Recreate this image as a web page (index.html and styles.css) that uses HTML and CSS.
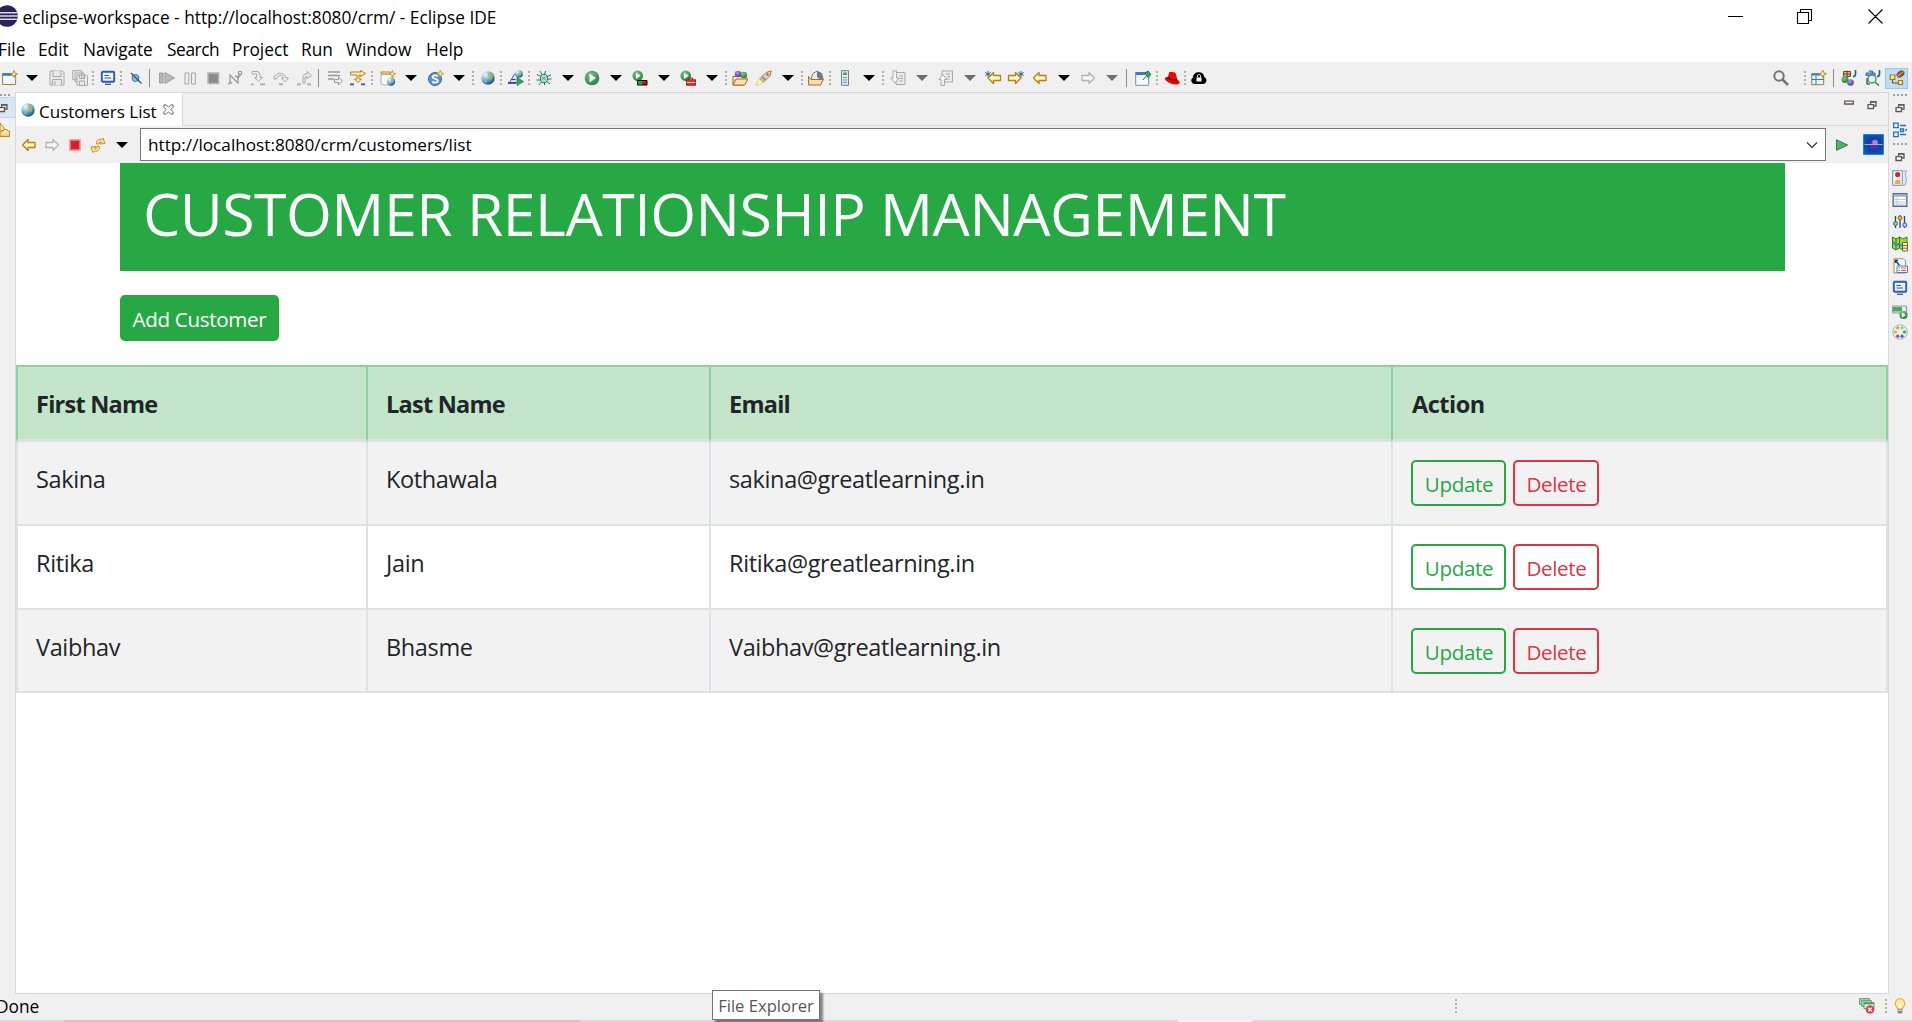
FILE: index.html
```
<!DOCTYPE html>
<html lang="en">
<head>
<meta charset="utf-8">
<title>eclipse-workspace - Eclipse IDE</title>
<link rel="stylesheet" href="styles.css">
</head>
<body>
<svg class="defs" aria-hidden="true">
  <defs>
    <radialGradient id="gGlobe" cx=".3" cy=".25" r=".85"><stop offset="0" stop-color="#f0fafe"/><stop offset=".5" stop-color="#6db1d8"/><stop offset="1" stop-color="#173f78"/></radialGradient>
    <radialGradient id="gGreen" cx=".4" cy=".3" r=".8"><stop offset="0" stop-color="#7cc58a"/><stop offset="1" stop-color="#1b7a34"/></radialGradient>
    <radialGradient id="gPurple" cx=".4" cy=".3" r=".8"><stop offset="0" stop-color="#a79bd8"/><stop offset="1" stop-color="#45348f"/></radialGradient>
    <linearGradient id="gFold" x1="0" y1="0" x2="0" y2="1"><stop offset="0" stop-color="#fff6d8"/><stop offset="1" stop-color="#efc56c"/></linearGradient>
    <radialGradient id="gEcl" cx=".55" cy=".5" r=".75"><stop offset="0" stop-color="#0a2c86"/><stop offset="1" stop-color="#0d62c6"/></radialGradient>
  </defs>
  <symbol id="caret" viewBox="0 0 16 16"><path d="M2 5h12L8 11z"/></symbol>
  <symbol id="dots" viewBox="0 0 4 16"><path d="M1 1h2v2H1zM1 5h2v2H1zM1 9h2v2H1zM1 13h2v2H1z" fill="#b9b0a2"/></symbol>
  <symbol id="hdots" viewBox="0 0 16 4"><path d="M1 1h2v2H1zM5 1h2v2H5zM9 1h2v2H9zM13 1h2v2h-2z" fill="#a79f94"/></symbol>
  <symbol id="plus" viewBox="0 0 8 8"><path d="M4 .5L5 3l2.500 1L5 5 4 7.500 3 5 .5 4 3 3z" fill="#fff3b0" stroke="#b98a12" stroke-width=".9"/></symbol>
  <symbol id="back" viewBox="0 0 16 16"><path d="M1.500 8L7 2.500V5.500h7v5H7v3z" stroke-width="1.300" stroke-linejoin="round"/></symbol>
  <symbol id="fwd" viewBox="0 0 16 16"><path d="M14.500 8L9 2.500V5.500H2v5h7v3z" stroke-width="1.300" stroke-linejoin="round"/></symbol>
  <symbol id="star" viewBox="0 0 6 6"><path d="M3 0v6M.3 1.500l5.400 3M.3 4.500l5.400-3" stroke="#2b5f8c" stroke-width="1"/></symbol>
  <symbol id="globe" viewBox="0 0 16 16"><circle cx="8" cy="8" r="6.700" fill="url(#gGlobe)"/><path d="M8.500 3l3-.3 2 2.300-1 2-1.500 3.500-1.500-2L8 6zM4 9l2.500 1L6 13 4 11.500z" fill="#a9b862" opacity=".8"/></symbol>
  <symbol id="runball" viewBox="0 0 16 16"><circle cx="8" cy="8" r="7.300" fill="url(#gGreen)"/><path d="M5.500 3.500L11.800 8l-6.300 4.500z" fill="#fff"/></symbol>
  <symbol id="mon" viewBox="0 0 16 16"><rect x="1.800" y="1.800" width="12.400" height="9.900" rx="1" fill="#eaf3fc" stroke="#2d5da3" stroke-width="1.900"/><path d="M4.500 5.500H9M4.500 8h6.500" stroke="#44547c" stroke-width="1.100"/><path d="M5 13.700h6v1.200H5z" fill="#2d4b93"/></symbol>
  <symbol id="balls" viewBox="0 0 16 16"><path d="M1 6.500h13.500L12 15H1z" fill="url(#gFold)" stroke="#a3692b"/><circle cx="6" cy="4" r="3.300" fill="url(#gPurple)"/><circle cx="11.700" cy="5" r="3.300" fill="url(#gGreen)"/><path d="M1 15l3-6h12l-3.500 6z" fill="#fbe3ac" stroke="#a3692b"/></symbol>
  <symbol id="restore" viewBox="0 0 10 10"><path d="M3.600 4V1.700h5.400V6H7M3 2h6.500" fill="none" stroke="#5e5853" stroke-width="1.300"/><path d="M1 4.700h5.500v3.800H1z" fill="#fff" stroke="#5e5853" stroke-width="1.300"/></symbol>
</svg>

<header class="titlebar">
  <svg class="logo" viewBox="0 0 18 22"><circle cx="7" cy="11" r="10.800" fill="#2c2255"/><path d="M0 7.800h17.300M0 11h18M0 14.200h17.300" stroke="#d8d6ea" stroke-width="1.500"/></svg>
  <span class="caption">eclipse-workspace - http://localhost:8080/crm/ - Eclipse IDE</span>
  <svg class="winctl" viewBox="0 0 160 20" fill="none" stroke="#000" stroke-width="1.100"><path d="M0 9.500h15M69.500 5.500h11v11h-11zM72.500 5.500v-3h11v11h-3M140.500 2.500l14 14M154.500 2.500l-14 14"/></svg>
</header>

<nav class="menubar"><span>File</span><span>Edit</span><span>Navigate</span><span>Search</span><span>Project</span><span>Run</span><span>Window</span><span>Help</span></nav>

<div class="toolbar">
  <svg viewBox="0 0 16 16"><path d="M.6 3.500h13v11H.6z" fill="#f3faff" stroke="#9a7b3a"/><path d="M.6 3h10v2.800H.6z" fill="#3d7ec0"/><path d="M8 13.500c4-1 5-4 5-6" stroke="#cfe6f6" fill="none"/><use href="#plus" x="8" width="8" height="8"/></svg>
  <svg class="car"><use href="#caret"/></svg>
  <svg viewBox="0 0 16 16" fill="#e9e9e9" stroke="#aaa"><path d="M1 1h12.500L15 2.500V15H1z"/><path d="M4 1v5.500h8V1M3.500 15V9.500h9V15M6 11v4" /></svg>
  <svg viewBox="0 0 16 16" fill="#e9e9e9" stroke="#aaa"><path d="M.7.7h9v9h-9zM3 3h9v9H3z"/><path d="M5 5h9.500L15.500 6v9.500H5zM7.500 5v3.500h5V5M7.500 15.500V11h5v4.500"/></svg>
  <svg class="dot"><use href="#dots"/></svg>
  <svg><use href="#mon"/></svg>
  <svg class="dot"><use href="#dots"/></svg>
  <svg viewBox="0 0 16 16"><circle cx="7.500" cy="8" r="3.500" fill="#8fc0dc" stroke="#2f7ba8"/><path d="M3 3l10.500 10.500" stroke="#3b4a56" stroke-width="1.300"/></svg>
  <i class="bar"></i>
  <svg viewBox="0 0 16 16" fill="#d8d8d8" stroke="#9b9b9b"><path d="M.6 3h3.500v10H.6zM6 2.500L15.500 8 6 13.500z" fill="#b9b9b9"/></svg>
  <svg viewBox="0 0 16 16" fill="#efefef" stroke="#a3a3a3"><path d="M3 3h3.800v11H3zM9.500 3h3.800v11H9.500z"/></svg>
  <svg viewBox="0 0 16 16"><path d="M3 3h10.500v10.500H3z" fill="#8b8b8b" stroke="#b5b5b5" stroke-width="1.500"/></svg>
  <svg viewBox="0 0 16 16" fill="none" stroke="#969696" stroke-width="1.200"><path d="M3 14V5l8 8V5"/><circle cx="13" cy="3" r="1.700"/><path d="M1 14.500l2-2.500 2 1.500M8 5.500l3 2.500 2.500-3"/></svg>
  <svg viewBox="0 0 16 16" fill="none" stroke="#a9a9a9"><path d="M4.500 7.500l4 4 4-4h-2.500V4L8 1.500H2V4h4.500v3.500z" fill="#eee"/><path d="M1 14.300h3M10 14.300h5" stroke-width="1.800"/></svg>
  <svg viewBox="0 0 16 16" fill="none" stroke="#a9a9a9"><path d="M1 9c0-7 11-8 12-1h2.500L12 12 8.500 8h2C10 4 4.500 5 3.500 9z" fill="#eee"/><path d="M6 14.300h4" stroke-width="1.800"/></svg>
  <svg viewBox="0 0 16 16" fill="none" stroke="#a9a9a9"><path d="M7 13V7c0-2 1-3 4-3V1.500L15.500 5.500 11 9V6.500c-1.500 0-2 .5-2 1.500v5z" fill="#eee"/><path d="M1 14.300h4M11 14.300h4" stroke-width="1.800"/></svg>
  <i class="bar"></i>
  <svg viewBox="0 0 16 16" fill="none" stroke="#999" stroke-width="1.500"><path d="M1 2h12M1 5.500h12M1 9h6"/><path d="M7.500 9.500h4V7l4 4-4 4v-2.500h-4z" fill="#eee" stroke-width="1"/></svg>
  <svg viewBox="0 0 16 16"><path d="M.6 2h10V.6L15.500 3.500l-4.900 3V5H9v4h2.500L8 12.500 4.500 9H7V5H.6z" fill="#fff0bb" stroke="#b97a15"/><path d="M0 14.300h4M11 14.300h4" stroke="#3d5a84" stroke-width="1.800"/></svg>
  <svg class="dot"><use href="#dots"/></svg>
  <svg viewBox="0 0 16 16"><rect x="1" y="4" width="12" height="11" rx="2.500" fill="#f7f9fc" stroke="#a5b0c0"/><path d="M1 2h9v2H1z" fill="#fff0bb" stroke="#b98a12"/><use href="#globe" x="6" y="6.500" width="10" height="10"/><use href="#plus" x="8.500" width="7.500" height="7.500"/></svg>
  <svg class="car"><use href="#caret"/></svg>
  <svg viewBox="0 0 16 16"><circle cx="7" cy="9" r="6.500" fill="#5b94cf" stroke="#2d66a8"/><path d="M9.800 6.300C8.500 5 4.800 5 4.800 7.200c0 2.300 5 1.200 5 3.500S6 13 4.200 11.500" fill="none" stroke="#fff" stroke-width="1.700"/><use href="#plus" x="8.500" width="7.500" height="7.500"/></svg>
  <svg class="car"><use href="#caret"/></svg>
  <svg class="dot"><use href="#dots"/></svg>
  <svg><use href="#globe"/></svg>
  <svg class="dot"><use href="#dots"/></svg>
  <svg viewBox="0 0 16 16"><path d="M1.500 12.500L6.500 4l3 .5v8z" fill="#dfe8f2" stroke="#3f5f97"/><path d="M0 13h8" stroke="#2c4f92" stroke-width="1.800"/><path d="M3.500 9.500h4" stroke="#2c4f92" stroke-width="1.200"/><use href="#globe" x="6.500" y="-.5" width="9" height="9"/><path d="M9 7.500l6.500 4L9 15.500z" fill="#38a558" stroke="#187a36" stroke-width=".7"/></svg>
  <svg class="dot"><use href="#dots"/></svg>
  <svg viewBox="0 0 16 16"><path d="M1 4.500l4 2M4 1l2 4M9.500 1l-1 4M15 5l-4 1.500M.5 10H5M3 15l3-4M14 14l-4-3M15.500 9H11M8.500 15v-3" stroke="#286f68" stroke-width="1"/><ellipse cx="8" cy="8.500" rx="3.600" ry="4.200" fill="#b5e0cc" stroke="#216f5d"/><path d="M6 7l4 3M6 10l3.500-3.500" stroke="#3d8f7a" stroke-width=".8"/></svg>
  <svg class="car"><use href="#caret"/></svg>
  <svg><use href="#runball"/></svg>
  <svg class="car"><use href="#caret"/></svg>
  <svg viewBox="0 0 16 16"><use href="#runball" x="0" y="0" width="11.500" height="11.500"/><path d="M5.500 10.500h9.500v4.500H5.500z" fill="#e00d0d" stroke="#000"/><path d="M6 11h4v3.500H6z" fill="#12b61d"/></svg>
  <svg class="car"><use href="#caret"/></svg>
  <svg viewBox="0 0 16 16"><use href="#runball" x="0" y="0" width="11.500" height="11.500"/><path d="M9 9.500V8h3.500v1.500" fill="none" stroke="#b31111"/><path d="M6.500 9.800h9v5.400h-9z" fill="#e23b36" stroke="#b31111"/><path d="M6.500 12.500h9" stroke="#fbb"/></svg>
  <svg class="car"><use href="#caret"/></svg>
  <svg class="dot"><use href="#dots"/></svg>
  <svg><use href="#balls"/></svg>
  <svg viewBox="0 0 16 16"><path d="M0 15.500c1-4 2-6 4-6.500l3 3c-1 2-3.500 3-7 3.500z" fill="#fff3b8" stroke="#f0b64a" stroke-width=".6"/><path d="M4 8.500l6-6L15.200.8 14 6l-6.500 6z" fill="#f6d7a2" stroke="#a8793f"/><path d="M5 7.500l3.500 3.800 2-2L7 5.500z" fill="#9a9aa6"/><circle cx="11.500" cy="4.500" r="1.300" fill="#4576b5"/></svg>
  <svg class="car"><use href="#caret"/></svg>
  <svg class="dot"><use href="#dots"/></svg>
  <svg viewBox="0 0 16 16"><path d="M3 9L5 3.500 9 1l4.500 2.500L15 9l-3 3z" fill="#e9eef4" stroke="#6c7683"/><path d="M9 1l4.500 2.500L15 9l-2 1.500L9 7z" fill="#6b7b8c"/><path d="M.6 15V6.500L3 9.500h9L15.500 9l-3 6z" fill="#fadf9f" stroke="#a3692b"/></svg>
  <svg class="dot"><use href="#dots"/></svg>
  <svg viewBox="0 0 16 16"><path d="M4.500.7h7v14.600h-7z" fill="#dfe9ef" stroke="#68819b"/><path d="M6 2.500h4V5H6z" fill="#45b13c"/><path d="M6 7.500h4M6 10h4M6 12.500h4" stroke="#7c93a8"/></svg>
  <svg class="car"><use href="#caret"/></svg>
  <svg class="dot"><use href="#dots"/></svg>
  <svg viewBox="0 0 16 16" fill="#ececec" stroke="#a9a9a9"><path d="M6 2.500h9v12H6z"/><path d="M9.500 6H13M9.500 8.500H13M9.500 11H13"/><path d="M3 1h3.500v7H9l-4.200 5L.8 8H3z" fill="#f5f5f5"/></svg>
  <svg class="car off"><use href="#caret"/></svg>
  <svg viewBox="0 0 16 16" fill="#ececec" stroke="#a9a9a9"><path d="M4 1h10.500v11H4z"/><path d="M8 4h4M9.500 6.500H12M9.500 9H12"/><path d="M3 15.500h3.500v-6H9L4.800 4.500.8 9.500H3z" fill="#f5f5f5"/></svg>
  <svg class="car off"><use href="#caret"/></svg>
  <svg viewBox="0 0 16 16" class="gold"><use href="#back" x="1.500" y="0" width="16" height="16"/><use href="#star" x="0" y="1" width="6" height="6"/></svg>
  <svg viewBox="0 0 16 16" class="gold"><use href="#fwd" x="-1.500" y="0" width="16" height="16"/><use href="#star" x="10" y="1" width="6" height="6"/></svg>
  <svg class="gold"><use href="#back"/></svg>
  <svg class="car"><use href="#caret"/></svg>
  <svg class="pale"><use href="#fwd"/></svg>
  <svg class="car off"><use href="#caret"/></svg>
  <i class="bar"></i>
  <svg viewBox="0 0 16 16"><path d="M.7 2.700h13v12.600H.7z" fill="#f4fafe" stroke="#7a8ca0"/><path d="M.5 2h10v3H.5z" fill="#3d7ec0"/><path d="M10 3l3-2 3 3.500-3 3zM11.500 5.500L8 10" fill="#39a35b" stroke="#1b7a3a"/></svg>
  <svg class="dot"><use href="#dots"/></svg>
  <svg viewBox="0 0 16 16"><ellipse cx="8.500" cy="10.500" rx="7.700" ry="3.200" fill="#e00" transform="rotate(18 8 10)"/><path d="M3.500 9.500L5 2.500c2-1.500 5 0 6.500.5l2 7c-3 2-7.500 1-10-.5z" fill="#f00505"/><path d="M3.800 7.500c2.200 2.300 6 3 9 2.200" fill="none" stroke="#200" stroke-width="1.200"/></svg>
  <svg class="dot"><use href="#dots"/></svg>
  <svg viewBox="0 0 16 16"><path d="M3.500 14A3.500 3.500 0 0 1 2 7.500C2 4 5 2 8 2.300c3 0 5 2 5.300 4.700A3.700 3.700 0 0 1 12.500 14z"/><path d="M5.500 7.500h5v4h-5z" fill="#fff"/><path d="M6.500 7.500V6c0-2 3-2 3 0v1.500" fill="none" stroke="#fff"/></svg>
  <svg viewBox="0 0 16 16" fill="none" stroke="#757575"><circle cx="6" cy="6" r="4.700" stroke-width="2"/><path d="M9.500 9.500l5.500 5.500" stroke-width="2.500"/></svg>
  <svg class="dot"><use href="#dots"/></svg>
  <svg viewBox="0 0 16 16"><path d="M.7 3.700h12v11H.7z" fill="#e8f4fc" stroke="#9a7b3a"/><path d="M.7 3.500h9v2H.7z" fill="#3d7ec0"/><path d="M.7 9.500h12M5 5.500v9" stroke="#3f75a8"/><use href="#plus" x="7.500" y="-.5" width="8.500" height="8.500"/></svg>
  <i class="bar"></i>
  <svg viewBox="0 0 16 16"><path d="M2.500 1.500h7v5h-7zM6 .5v6M2.500 4h7" fill="#e2b88a" stroke="#70421e"/><circle cx="4" cy="9.500" r="3.500" fill="url(#gGreen)"/><circle cx="9.500" cy="12.500" r="3.300" fill="url(#gPurple)"/><path d="M14.500 0v4c0 2-1 2.500-2.500 2.500" stroke="#27649e" stroke-width="1.700" fill="none"/></svg>
  <svg viewBox="0 0 16 16"><path d="M1 3h9v2.500H1zM3.500 1h4v2" fill="#6ba9ea" stroke="#296cb3"/><circle cx="7" cy="9" r="4" fill="#e6f5e7" stroke="#4a8c66" stroke-width="1.300"/><path d="M2 8v6h3M10 12l4 3.500" stroke="#487b5b" stroke-width="1.600" fill="none"/><path d="M14.500 0v4c0 2-1 2.500-2.500 2.500" stroke="#27649e" stroke-width="1.700" fill="none"/></svg>
  <span class="active"><svg viewBox="0 0 16 16"><path d="M3.500 9v4h6" fill="none" stroke="#6a5010"/><path d="M1.200 5h4.600v4.500H1.200zM9.500 10.500h4v4h-4z" fill="#ffe691" stroke="#a8790f" stroke-width="1.200"/><ellipse cx="11.500" cy="4" rx="4.300" ry="3" transform="rotate(-35 11.500 4)" fill="#8a5226"/><path d="M9 6.500c1-3 3-1.500 5-5" stroke="#e8c49c" fill="none"/></svg></span>
</div>

<main class="workbench">
  <aside class="rail rail-left">
    <svg class="hd"><use href="#hdots"/></svg>
    <span class="hot"><svg width="10" height="10"><use href="#restore"/></svg></span>
    <svg class="pkg" viewBox="0 0 12 16"><path d="M0 1l4 5v3H0z" fill="#fce9b4" stroke="#b98a12"/><path d="M0 9h3l1-1.500h3L8 9h1.500v5.500H0z" fill="url(#gFold)" stroke="#b98a12"/></svg>
  </aside>

  <section class="editor">
    <div class="tabs">
      <div class="tab"><svg><use href="#globe"/></svg><span>Customers List</span><svg class="x" viewBox="0 0 12 12"><path d="M1 1h2.500L6 3.500 8.500 1H11v2.500L8.500 6 11 8.500V11H8.500L6 8.500 3.500 11H1V8.500L3.500 6 1 3.500z" fill="#fff" stroke="#5b5b5b"/></svg></div>
      <div class="tabfill">
        <svg width="10" height="6" viewBox="0 0 10 6"><path d="M.7 1.200h8.600v2.800H.7z" fill="#fff" stroke="#5e5853" stroke-width="1.300"/></svg>
        <svg width="10" height="10"><use href="#restore"/></svg>
      </div>
    </div>
    <div class="addressbar">
      <svg class="gold"><use href="#back"/></svg>
      <svg class="pale"><use href="#fwd"/></svg>
      <svg viewBox="0 0 16 16"><path d="M3 3h10v10H3z" fill="#d8202d" stroke="#ef8a8f" stroke-width="1.500"/></svg>
      <svg viewBox="0 0 16 16"><path d="M6.500 7C6 3.500 9 1.500 11.500 2.500L13 1l2 5.500-5 .500L11.500 5C10 4.500 9 5.500 9 7zM9.500 9.500c.5 3.500-2.500 5.500-5 4.500L3 15.500 1 10l5-.5-1.500 2c1.500.5 2.500-.5 2.500-2z" fill="#ffe39a" stroke="#bd8420" stroke-width=".9"/></svg>
      <svg class="car"><use href="#caret"/></svg>
      <div class="url"><span>http://localhost:8080/crm/customers/list</span><svg width="12" height="8" viewBox="0 0 12 8"><path d="M1 1.500l5 5 5-5" fill="none" stroke="#333" stroke-width="1.200"/></svg></div>
      <svg class="go" viewBox="0 0 12 12"><path d="M.5.8L11.500 6 .5 11.300z" fill="#55b06b" stroke="#2c7c43"/></svg>
      <svg class="ecl" viewBox="0 0 21 21"><path d="M.5.500h20v20H.5z" fill="url(#gEcl)" stroke="#1c86e0"/><circle cx="11" cy="10.500" r="5.300" fill="#4a3596"/><circle cx="12" cy="8.500" r="2.800" fill="#9c8ad6"/><path d="M1.500 10.500h18" stroke="#a9a4ee"/></svg>
    </div>

    <div class="page">
      <div class="container">
        <h1>CUSTOMER RELATIONSHIP MANAGEMENT</h1>
        <a class="btn add">Add Customer</a>
      </div>
      <table>
        <colgroup><col class="c1"><col class="c2"><col class="c3"><col class="c4"></colgroup>
        <thead><tr><th>First Name</th><th>Last Name</th><th>Email</th><th>Action</th></tr></thead>
        <tbody>
          <tr><td>Sakina</td><td>Kothawala</td><td>sakina@greatlearning.in</td><td><div class="actions"><a class="btn update">Update</a><a class="btn delete">Delete</a></div></td></tr>
          <tr><td>Ritika</td><td>Jain</td><td>Ritika@greatlearning.in</td><td><div class="actions"><a class="btn update">Update</a><a class="btn delete">Delete</a></div></td></tr>
          <tr><td>Vaibhav</td><td>Bhasme</td><td>Vaibhav@greatlearning.in</td><td><div class="actions"><a class="btn update">Update</a><a class="btn delete">Delete</a></div></td></tr>
        </tbody>
      </table>
    </div>
  </section>

  <aside class="rail rail-right">
    <svg class="hd"><use href="#hdots"/></svg>
    <svg class="rs" width="10" height="10"><use href="#restore"/></svg>
    <svg viewBox="0 0 16 16" fill="#eaf5fd" stroke="#2176ae" stroke-width="1.300"><path d="M1.700 1.200h4.500v4.500H1.700zM1.700 10.200h4.500v4.500H1.700zM8 3.500h6M8 12.500h6M8.500 7h3v2.500h-3zM13 8h2"/></svg>
    <svg class="hd"><use href="#hdots"/></svg>
    <svg class="rs" width="10" height="10"><use href="#restore"/></svg>
    <svg viewBox="0 0 16 16"><path d="M.7.7h9.600v14.600H.7z" fill="#f3f6fb" stroke="#7b8cae"/><path d="M10.500 1H15c-2 2-2 4-1 6s0 6-1 8h-2.500z" fill="#dce9f7" stroke="#9ab"/><circle cx="5.700" cy="4.500" r="2.600" fill="#d3232e"/><path d="M3 14v-2c0-3 5.500-3 5.500 0v2z" fill="#f5a53a"/></svg>
    <svg viewBox="0 0 16 16"><path d="M1.200 1.700h13.600v12.600H1.200z" fill="#fff" stroke="#5a6c93" stroke-width="1.400"/><path d="M1.500 3.500h13" stroke="#8ba6d0" stroke-width="2"/><path d="M5 5v9M2 7.500h12.500M2 10h12.500M2 12.200h12.500" stroke="#b4bccd" stroke-width=".8"/></svg>
    <svg viewBox="0 0 16 16"><path d="M3.500 2v12M8 1v13M12.500 2v12" stroke="#263d9a" stroke-width="1.300"/><circle cx="3.500" cy="9.500" r="2" fill="#8bd280" stroke="#2d7b37"/><circle cx="8" cy="4" r="2" fill="#f3b630" stroke="#9b650b"/><circle cx="12.800" cy="11" r="2" fill="#bcd7f3" stroke="#315ca1"/></svg>
    <svg viewBox="0 0 16 16"><path d="M.5 1l3.500 2 3.500-2 3.500 2L15 1v11l-4 2-3.500-2L4 14l-3.500-2z" fill="#a5da35" stroke="#36741c"/><path d="M4 3v11M7.500 1v11" stroke="#36741c"/><path d="M1 6l3 3 3-1 3 2" stroke="#2790b6" stroke-width="2" fill="none"/><path d="M10.500 6.500h5v8.500h-5zM11 9.500h4M11 12.200h4" fill="#fff2b8" stroke="#776433"/></svg>
    <svg viewBox="0 0 16 16"><path d="M2 .8h9.500L13.500 3v12H2z" fill="#f6faff" stroke="#a08d55"/><path d="M3.500 2.500l4 5M3.300 5V2.400H6" stroke="#1c3160" stroke-width="1.300" fill="none"/><path d="M5 8h10.500v6.500H5z" fill="#fff" stroke="#4a7ec0"/><path d="M6.500 10h1.500M6.500 12.500h1.500" stroke="#3b9b4f"/><path d="M9 10h5M9 12.500h5" stroke="#e05252"/></svg>
    <svg><use href="#mon"/></svg>
    <svg viewBox="0 0 16 16"><path d="M.6 2h14v7H.6z" fill="#e3f0e6" stroke="#8794a0"/><path d="M1 3h9v4.500H1z" fill="#4bac5d"/><use href="#runball" x="7" y="6.500" width="9" height="9"/></svg>
    <svg viewBox="0 0 16 16"><circle cx="8" cy="8" r="7.200" fill="#e8f1fb" stroke="#9db7d8"/><circle cx="5.700" cy="3.800" r="1.600" fill="#e99a2b"/><circle cx="10" cy="3.800" r="1.600" fill="#b9c52b"/><circle cx="3.500" cy="8" r="1.600" fill="#f0a813"/><circle cx="12.400" cy="8" r="1.600" fill="#3ba346"/><circle cx="5.700" cy="12.200" r="1.600" fill="#d33d3d"/><circle cx="10" cy="12.200" r="1.600" fill="#3467bd"/></svg>
  </aside>
</main>

<footer class="status">
  <span class="done">Done</span>
  <svg class="dot"><use href="#dots"/></svg>
  <svg viewBox="0 0 16 16"><path d="M.5.500h10v6H.5z" fill="#9fd1ad" stroke="#7e9a91"/><path d="M2.500 2.500h10v6h-10z" fill="#9fd1ad" stroke="#7e9a91"/><path d="M5 4.700h10v6H5z" fill="#dff2e2" stroke="#5b9c6b"/><path d="M5 5.500h10" stroke="#42a65a" stroke-width="1.600"/><circle cx="11" cy="11.500" r="4.300" fill="#d9444a"/><path d="M9.300 9.800l3.400 3.400M12.700 9.800l-3.400 3.400" stroke="#fff" stroke-width="1.300"/></svg>
  <svg class="dot"><use href="#dots"/></svg>
  <svg viewBox="0 0 16 16"><path d="M5.500 10.500C5 9 3.200 8 3.200 5.500a4.800 4.800 0 0 1 9.600 0c0 2.500-1.800 3.500-2.300 5z" fill="#ffeb9c" stroke="#f0b13a" stroke-width="1.200"/><path d="M7 5v5.500h2V5z" fill="#fff"/><path d="M5.500 11h5v2.500l-1 2h-3l-1-2z" fill="#7b8596"/><path d="M5.500 12.300h5" stroke="#dde"/></svg>
</footer>
<div class="taskbar"><i></i><i></i><i></i><i></i><i></i></div>
<div class="tooltip">File Explorer</div>
</body>
</html>
```
FILE: styles.css
```
* { box-sizing: border-box; }

body {
  margin: 0;
  width: 1912px;
  height: 1022px;
  overflow: hidden;
  position: relative;
  display: flex;
  flex-direction: column;
  background: #fff;
  color: #000;
  font: 17.3px/28px "Open Sans", "Noto Sans", sans-serif;
}

svg { display: block; width: 16px; height: 16px; flex: none; }
.defs { position: absolute; width: 0; height: 0; }
svg.dot { width: 4px; }
.car { fill: #000; }
.car.off { fill: #6e6e6e; }
.gold { fill: #fff7c8; stroke: #b87d14; overflow: visible; }
.pale { fill: #f6f6f6; stroke: #b3b3b3; }

/* window frame */
.titlebar { display: flex; height: 35px; line-height: 35px; flex: none; }
.logo { width: 18px; height: 22px; margin: 5px 4.5px 0 0; }
.caption { flex: 1; white-space: nowrap; }
.winctl { width: 160px; height: 20px; margin: 7px 24px 0 0; }

.menubar {
  display: grid;
  grid-template-columns: 40px 45px 84px 65px 69px 45px 80px 60px;
  height: 27px;
  flex: none;
  margin-left: -2px;
  line-height: 30px;
}
.menubar span:nth-child(3) { letter-spacing: -.1px; }
.menubar span:nth-child(4) { letter-spacing: -.4px; }

.toolbar {
  display: grid;
  grid-template-columns: 22px 25px 23px 19px 9px 19px 9px 21px 10px 23px 23px 22px 23px 23px 23px 22px 9px 23px 20px 10px 23px 25px 23px 20px 9px 19px 9px 19px 9px 24px 24px 24px 24px 24px 24px 24px 20px 8px 24px 24px 20px 8px 20px 9px 24px 20px 9px 24px 24px 24px 23px 23px 24px 24px 24px 24px 22px 9px 20px 9px 19px 8px 582px 30px 8px 22px 8px 24px 20px 25px;
  align-items: center;
  height: 30px;
  flex: none;
  padding: 2px 0 0 2px;
  background: #f0f0f0;
}
.bar { width: 1px; height: 18px; background: #8c8c8c; }
.active {
  width: 23px;
  height: 21px;
  display: grid;
  place-items: center;
  background: #c0dcf3;
  border: 1px solid #90c8f6;
}

.workbench {
  display: grid;
  grid-template-columns: 15px 1874px 23px;
  height: 902px;
  flex: none;
  background: #f0f0f0;
}

.rail { display: flex; flex-direction: column; }
.rail .hd { height: 4px; }
.rail-left { padding-top: 1px; overflow: hidden; }
.rail-left .hd { margin-left: -5px; }
.hot {
  height: 21px;
  display: grid;
  align-items: center;
  background: #d8e6f2;
  border: solid #b9d7ee;
  border-width: 1px 0;
}
.hot svg { margin-left: -2px; width: 10px; height: 10px; }
.pkg { width: 12px; height: 16px; margin-top: 4px; }

.rail-right {
  display: grid;
  grid-template-rows: 10px 19px 20px 10px 18px 22px 22px 22px 22px 22px 24px 20px 16px;
  align-content: start;
  padding: 1px 0 0 3px;
}
.rail-right .rs { width: 10px; height: 10px; margin-left: 3px; }

/* editor part */
.editor {
  display: flex;
  flex-direction: column;
  border: 1px solid #d8d8d8;
}
.tabs { display: flex; height: 33px; flex: none; }
.tab {
  width: 167px;
  display: flex;
  align-items: center;
  padding: 4px 0 0 4px;
  background: #fff;
  border-right: 1px solid #d8d8d8;
  font-size: 17px;
  white-space: nowrap;
}
.tab span { margin: 0 6px 0 3px; }
.tab svg { width: 16px; height: 16px; margin-top: -3px; }
.tab svg.x { width: 11px; height: 11px; margin-top: -5px; }
.tabfill {
  flex: 1;
  display: flex;
  gap: 13px;
  padding: 7px 11px 0 0;
  justify-content: flex-end;
  border-bottom: 1px solid #d8d8d8;
}
.tabfill svg { width: 10px; height: 10px; }
.tabfill svg:first-child { height: 6px; }

.addressbar {
  display: flex;
  align-items: center;
  height: 37px;
  flex: none;
  background: #f0f0f0;
  padding: 0 3px 0 5px;
  gap: 7px;
}
.addressbar .car { margin-left: 1px; }
.url {
  display: flex;
  align-items: center;
  justify-content: space-between;
  width: 1686px;
  height: 33px;
  margin-left: 3px;
  padding: 0 7px 0 7px;
  background: #fff;
  border: 1px solid #767676;
  line-height: 31px;
  font-size: 17.2px;
}
.url svg { width: 12px; height: 8px; }
.addressbar .go { width: 12px; height: 12px; margin-left: 3px; }
.addressbar .ecl { width: 21px; height: 21px; margin-left: 8px; }

/* web page shown in the internal browser */
.page { flex: 1; background: #fff; color: #212529; font-size: 23.5px; line-height: 36px; letter-spacing: -.36px; }
.container { margin: 0 103px 0 104px; height: 202px; }
h1 {
  margin: 0 0 24px;
  height: 108px;
  padding-left: 23px;
  background: #28a745;
  color: #f8f9fa;
  font-size: 59px;
  font-weight: 400;
  line-height: 101px;
  letter-spacing: -.51px;
}
.btn {
  display: block;
  height: 46px;
  border: 2px solid;
  border-radius: 5px;
  text-align: center;
  font-size: 20.6px;
  line-height: 44px;
  letter-spacing: -.2px;
}
.add { width: 159px; background: #28a745; border-color: #28a745; color: #fff; letter-spacing: -.33px; }
.actions { display: flex; gap: 7px; margin-top: -1px; }
.update { width: 95px; padding-left: 1px; color: #28a745; letter-spacing: -.35px; }
.delete { width: 86px; padding-left: 1px; color: #dc3545; letter-spacing: -.35px; }

table { width: 1872px; table-layout: fixed; border-collapse: separate; border-spacing: 0; }
.c1 { width: 350px; }
.c2 { width: 343px; }
.c3 { width: 682px; }
.c4 { width: 497px; }
th, td {
  padding: 19px 0 0 18px;
  text-align: left;
  vertical-align: top;
  border: 0 solid #dee2e6;
  border-left-width: 2px;
  border-bottom-width: 2px;
}
th:last-child, td:last-child { border-right-width: 2px; }
th {
  height: 77px;
  background: #c3e6cb;
  border-color: #8fd19e #8fd19e #dee2e6;
  border-top-width: 2px;
  border-bottom-width: 3px;
  font-weight: 700;
  letter-spacing: -.75px;
}
td { height: 84px; }
tr:last-child td { height: 83px; }
th:last-child { padding-left: 19px; letter-spacing: -.5px; }
tbody tr:nth-child(odd) td { background: #f2f2f2; }

/* status line */
.status {
  display: grid;
  grid-template-columns: 1454px 405px 25px 8px 20px;
  align-items: center;
  height: 26px;
  flex: none;
  background: #f0f0f0;
  line-height: 24px;
}
.status svg { margin-top: -3px; }
.done { margin: -1px 0 0 -4px; }
.taskbar { display: grid; grid-template-columns: 64px 516px 598px 74px 660px; height: 2px; flex: none; }
.taskbar i { background: #d3d9ec; }
.taskbar i:nth-child(2) { background: #c9c9c9; }
.taskbar i:nth-child(4) { background: #f4f5fa; }
.tooltip {
  position: absolute;
  left: 712px;
  top: 990px;
  width: 108px;
  height: 30px;
  border: 1px solid #767676;
  background: #fff;
  color: #575757;
  font-size: 16.6px;
  line-height: 29px;
  text-align: center;
  white-space: nowrap;
  box-shadow: 3px 3px 2px rgba(0, 0, 0, .45);
}
```
